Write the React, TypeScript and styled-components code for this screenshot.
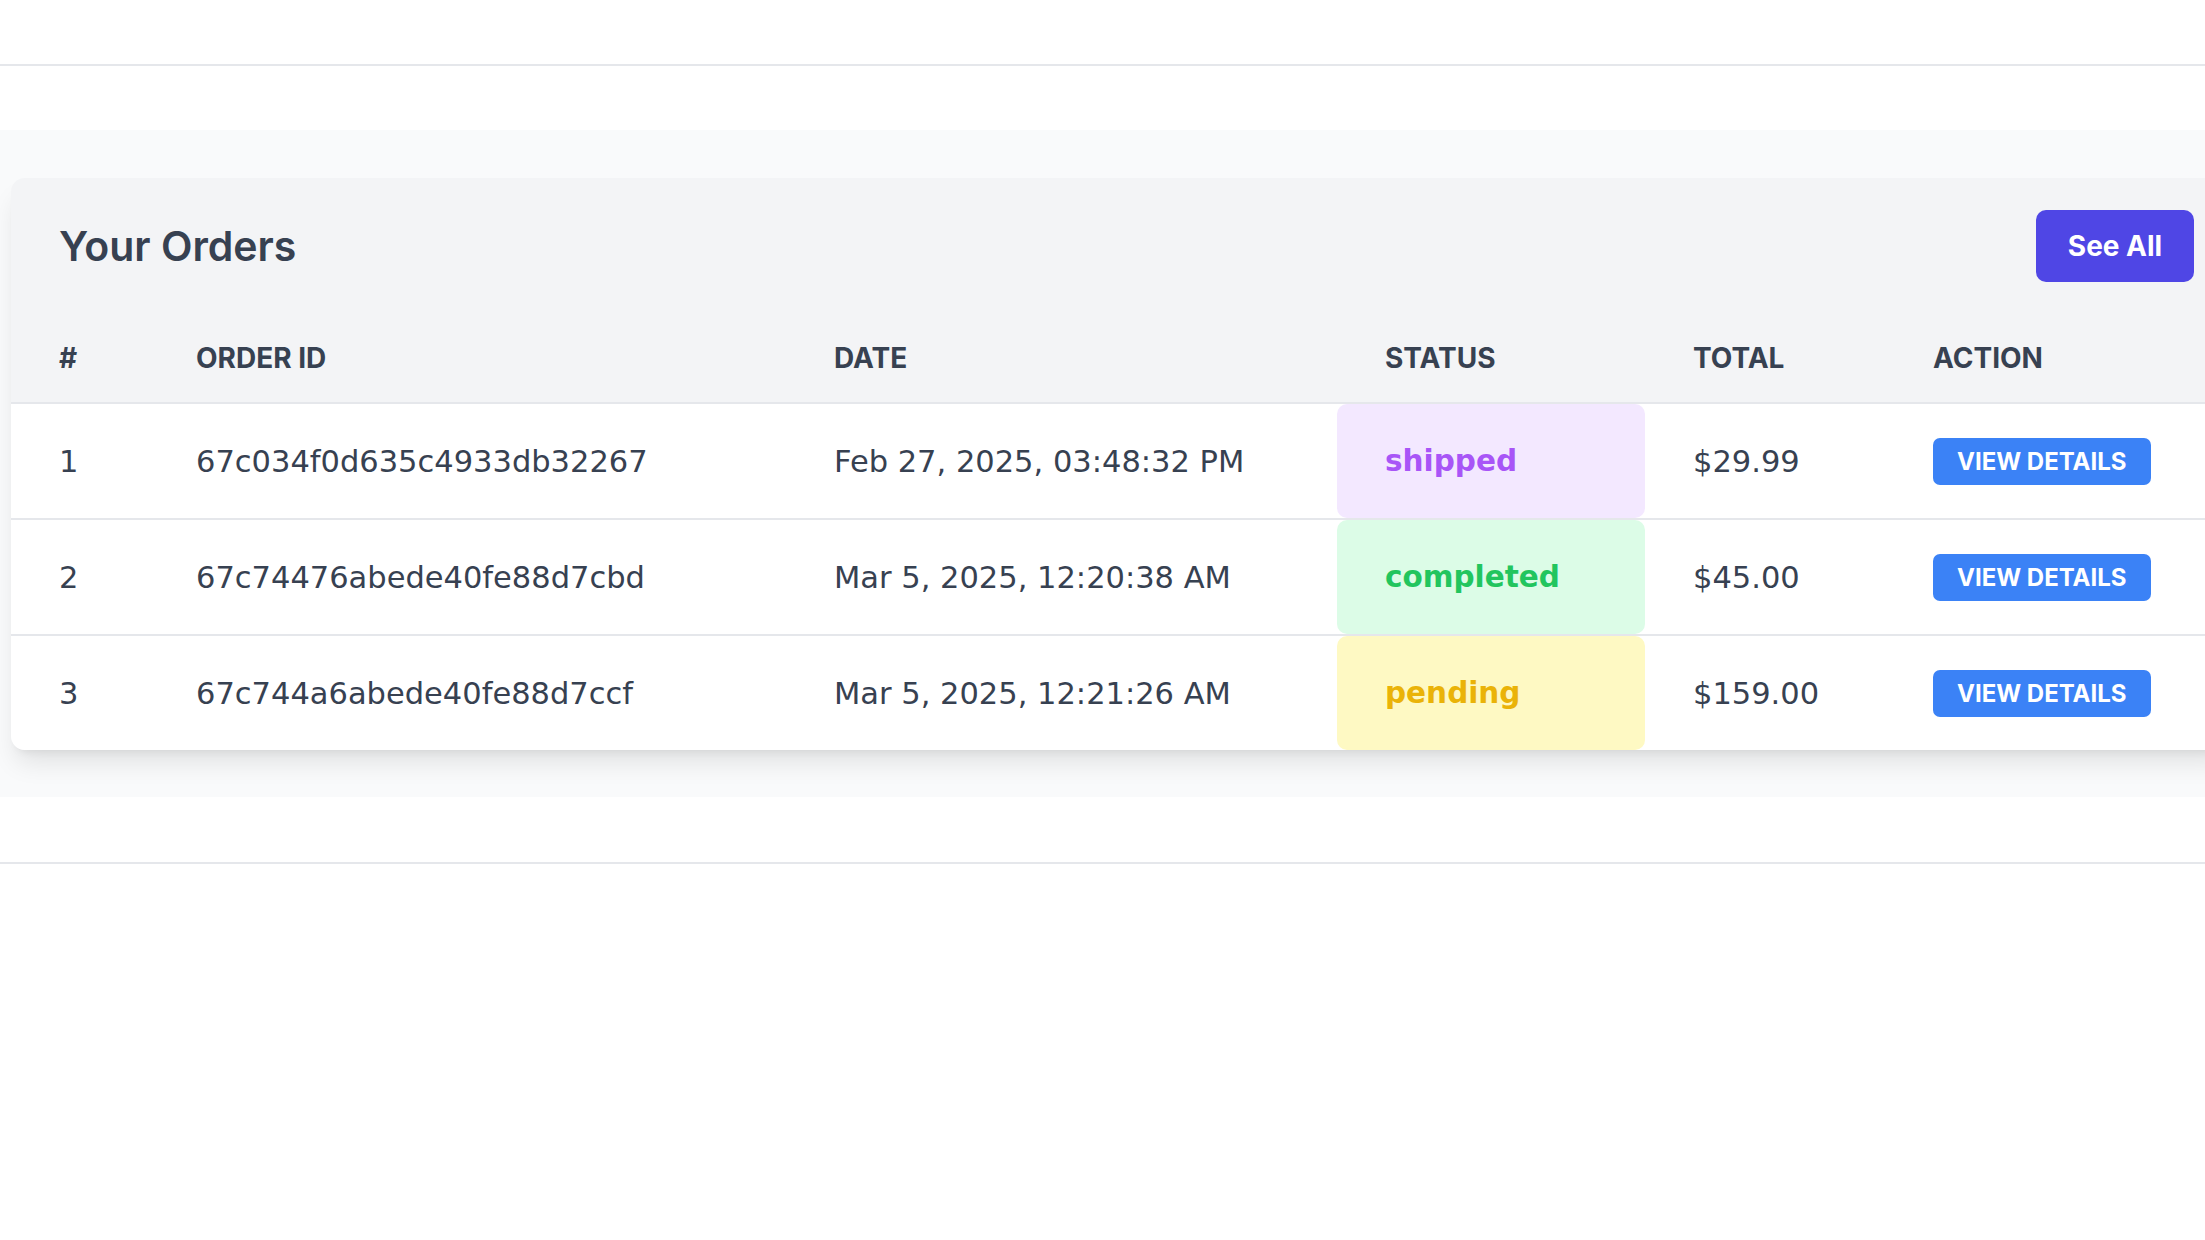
import React from "react";
import styled, { createGlobalStyle } from "styled-components";

const GlobalStyle = createGlobalStyle`
  html, body {
    margin: 0;
    padding: 0;
    background: #ffffff;
    overflow: hidden;
  }
  body {
    font-family: "DejaVu Sans", "Noto Sans", sans-serif;
    color: #374151;
  }
  * { box-sizing: border-box; }
`;

const COLUMNS = "137px 638px 551px 308px 240px 346px";

const Page = styled.div`
  display: flex;
  flex-direction: column;
  min-height: 1240px;
`;

const TopBar = styled.header`
  height: 66px;
  border-bottom: 2px solid #e5e7eb;
  background: #ffffff;
`;

const Main = styled.main`
  margin-top: 64px;
  background: #f9fafb;
  padding: 48px 0 47px 11px;
`;

const Card = styled.section`
  width: 2220px;
  background: #f3f4f6;
  border-radius: 14px;
  overflow: hidden;
  box-shadow: 0 17px 26px -5px rgba(0, 0, 0, 0.1), 0 7px 10px -7px rgba(0, 0, 0, 0.1);
`;

const CardHeader = styled.div`
  display: flex;
  align-items: center;
  justify-content: space-between;
  padding: 32px 37px 32px 48px;
`;

const Title = styled.h2`
  margin: 0;
  font-family: "Inter", "DejaVu Sans", sans-serif;
  font-weight: 600;
  font-size: 41px;
  line-height: 1;
  color: #374151;
`;

const SeeAllButton = styled.button`
  height: 72px;
  width: 158px;
  border: none;
  border-radius: 10px;
  background: #4f46e5;
  color: #ffffff;
  font-family: "Inter", "DejaVu Sans", sans-serif;
  font-weight: 700;
  font-size: 28px;
  cursor: pointer;
`;

const Table = styled.div`
  display: flex;
  flex-direction: column;
`;

const HeadRow = styled.div`
  display: grid;
  grid-template-columns: ${COLUMNS};
  height: 90px;
  border-bottom: 2px solid #e5e7eb;
`;

const HeadCell = styled.div`
  display: flex;
  align-items: center;
  padding: 0 48px;
  font-family: "Inter", "DejaVu Sans", sans-serif;
  font-weight: 700;
  font-size: 28px;
  color: #374151;
  white-space: nowrap;
`;

const BodyRow = styled.div<{ $last?: boolean }>`
  display: grid;
  grid-template-columns: ${COLUMNS};
  height: ${(p) => (p.$last ? "114px" : "116px")};
  background: #ffffff;
  border-bottom: ${(p) => (p.$last ? "none" : "2px solid #e5e7eb")};
`;

const Cell = styled.div`
  display: flex;
  align-items: center;
  padding: 0 48px;
  font-size: 30.5px;
  color: #374151;
  white-space: nowrap;
`;

type Tone = "shipped" | "completed" | "pending";

const TONES: Record<Tone, { bg: string; fg: string }> = {
  shipped: { bg: "#f3e8ff", fg: "#a855f7" },
  completed: { bg: "#dcfce7", fg: "#22c55e" },
  pending: { bg: "#fef9c3", fg: "#eab308" },
};

const StatusCell = styled(Cell)<{ $tone: Tone }>`
  background: ${(p) => TONES[p.$tone].bg};
  color: ${(p) => TONES[p.$tone].fg};
  border-radius: 10px;
  font-weight: 700;
  font-size: 29.5px;
`;

const DetailsButton = styled.button`
  height: 47px;
  padding: 0 24px;
  border: none;
  border-radius: 7px;
  background: #3b82f6;
  color: #ffffff;
  font-family: "Inter", "DejaVu Sans", sans-serif;
  font-weight: 700;
  font-size: 24px;
  white-space: nowrap;
  cursor: pointer;
`;

const Footer = styled.footer`
  margin-top: 65px;
  border-top: 2px solid #e5e7eb;
  flex: 1;
  background: #ffffff;
`;

const HEADERS = ["#", "ORDER ID", "DATE", "STATUS", "TOTAL", "ACTION"];

const ORDERS: { id: string; date: string; status: Tone; total: string }[] = [
  { id: "67c034f0d635c4933db32267", date: "Feb 27, 2025, 03:48:32 PM", status: "shipped", total: "$29.99" },
  { id: "67c74476abede40fe88d7cbd", date: "Mar 5, 2025, 12:20:38 AM", status: "completed", total: "$45.00" },
  { id: "67c744a6abede40fe88d7ccf", date: "Mar 5, 2025, 12:21:26 AM", status: "pending", total: "$159.00" },
];

export default function App() {
  return (
    <>
      <GlobalStyle />
      <Page>
        <TopBar />
        <Main>
          <Card>
            <CardHeader>
              <Title>Your Orders</Title>
              <SeeAllButton>See All</SeeAllButton>
            </CardHeader>
            <Table>
              <HeadRow>
                {HEADERS.map((h) => (
                  <HeadCell key={h}>{h}</HeadCell>
                ))}
              </HeadRow>
              {ORDERS.map((o, i) => (
                <BodyRow key={o.id} $last={i === ORDERS.length - 1}>
                  <Cell>{i + 1}</Cell>
                  <Cell>{o.id}</Cell>
                  <Cell>{o.date}</Cell>
                  <StatusCell $tone={o.status}>{o.status}</StatusCell>
                  <Cell>{o.total}</Cell>
                  <Cell>
                    <DetailsButton>VIEW DETAILS</DetailsButton>
                  </Cell>
                </BodyRow>
              ))}
            </Table>
          </Card>
        </Main>
        <Footer />
      </Page>
    </>
  );
}
